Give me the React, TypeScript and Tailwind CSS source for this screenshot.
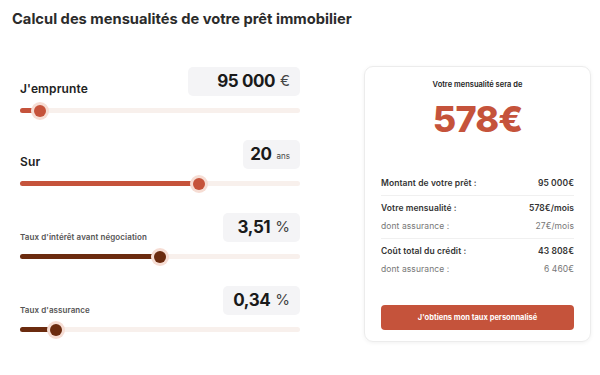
import React from 'react';

const ORANGE = '#c5533b';
const BROWN = '#6b2b0f';

interface SliderProps {
  label: string;
  small?: boolean;
  value: string;
  unit: string;
  unitSmall?: boolean;
  boxWidth: string;
  pct: number;
  dark?: boolean;
}

function SliderBlock({ label, small, value, unit, unitSmall, boxWidth, pct, dark }: SliderProps) {
  const color = dark ? BROWN : ORANGE;
  return (
    <div className="flex flex-col h-[73px]">
      <div className="flex items-end justify-between">
        <span
          className={
            small
              ? 'text-[8px] leading-[10px] font-semibold text-[#555] tracking-[0.01em]'
              : 'text-[12px] leading-[14px] font-semibold text-[#222] tracking-[0.01em]'
          }
        >
          {label}
        </span>
        <div
          className={`${boxWidth} h-[29px] rounded-[5px] bg-[#f4f4f6] flex items-center justify-end pr-[10px] gap-[5px]`}
        >
          <span className="text-[17px] font-bold text-[#1a1a1a] tracking-tight">{value}</span>
          <span className={unitSmall ? 'text-[8px] text-[#444] mt-[3px]' : 'text-[15px] text-[#444]'}>{unit}</span>
        </div>
      </div>
      <div className="relative mt-[12px] h-[5px] rounded-full bg-[#f8f0ec]">
        <div className="h-full rounded-full" style={{ width: `${pct}%`, backgroundColor: color }} />
        <div
          className="absolute top-1/2 w-[12px] h-[12px] -translate-x-1/2 -translate-y-1/2 rounded-full ring-[3px] ring-[#f6ddd4]"
          style={{ left: `${pct}%`, backgroundColor: color }}
        />
      </div>
    </div>
  );
}

function Row({ label, value, bold }: { label: string; value: string; bold?: boolean }) {
  const cls = bold
    ? 'text-[8.5px] font-semibold text-[#333] tracking-[0.01em]'
    : 'text-[8.5px] text-[#777] tracking-[0.01em]';
  return (
    <div className="flex justify-between items-center h-[18px]">
      <span className={cls}>{label}</span>
      <span className={cls}>{value}</span>
    </div>
  );
}

export default function App() {
  return (
    <div
      className="w-[600px] h-[375px] bg-white overflow-hidden"
      style={{ fontFamily: 'Inter, "Open Sans", sans-serif' }}
    >
      <h1 className="pl-[12px] pt-[8px] text-[14.7px] font-bold text-[#2b2b2b]">
        Calcul des mensualités de votre prêt immobilier
      </h1>

      <div className="flex mt-[37px]">
        {/* sliders */}
        <div className="ml-[20px] w-[280px] flex flex-col">
          <SliderBlock label="J'emprunte" value="95 000" unit="€" boxWidth="w-[112px]" pct={7} />
          <SliderBlock label="Sur" value="20" unit="ans" unitSmall boxWidth="w-[57px]" pct={64} />
          <SliderBlock
            label="Taux d'intérêt avant négociation"
            small
            value="3,51"
            unit="%"
            boxWidth="w-[77px]"
            pct={50}
            dark
          />
          <SliderBlock label="Taux d'assurance" small value="0,34" unit="%" boxWidth="w-[77px]" pct={13} dark />
        </div>

        {/* result card */}
        <div className="ml-[64px] -mt-[1px] w-[227px] h-[276px] rounded-[9px] border border-[#ececec] shadow-[0_1px_4px_rgba(0,0,0,0.06)] px-[16px] pt-[12px] flex flex-col">
          <div className="text-center text-[7.5px] font-semibold text-[#222]">Votre mensualité sera de</div>
          <div className="text-center text-[36px] font-extrabold leading-none mt-[11px] tracking-tight" style={{ color: ORANGE }}>
            578€
          </div>

          <div className="mt-[37px] flex flex-col">
            <Row label="Montant de votre prêt :" value="95 000€" bold />
            <div className="border-t border-[#f0f0f0] my-[3px]" />
            <Row label="Votre mensualité :" value="578€/mois" bold />
            <Row label="dont assurance :" value="27€/mois" />
            <div className="border-t border-[#f0f0f0] my-[3px]" />
            <Row label="Coût total du crédit :" value="43 808€" bold />
            <Row label="dont assurance :" value="6 460€" />
          </div>

          <button
            className="mt-auto mb-[11px] h-[25px] w-full rounded-[4px] text-white text-[7.5px] font-bold"
            style={{ backgroundColor: ORANGE }}
          >
            J'obtiens mon taux personnalisé
          </button>
        </div>
      </div>
    </div>
  );
}
